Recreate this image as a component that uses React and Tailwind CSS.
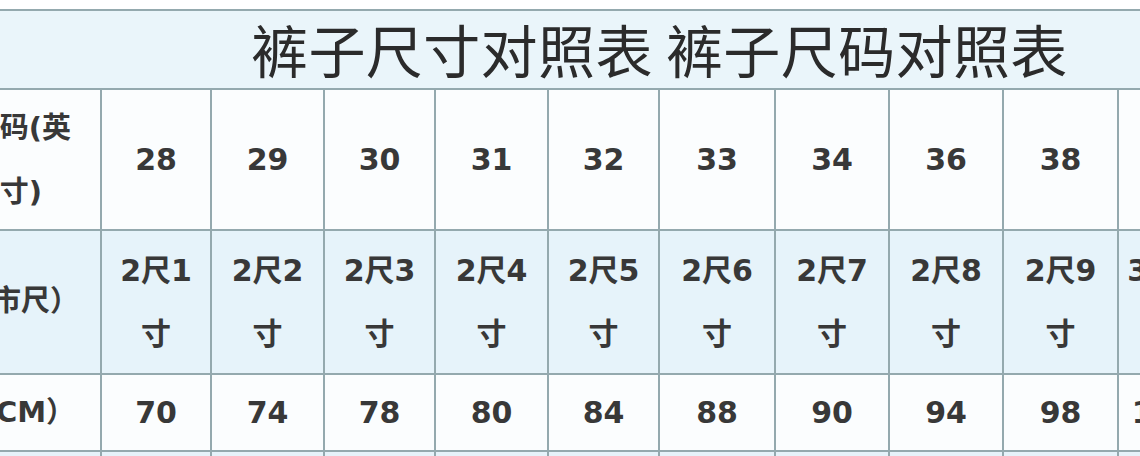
const widths = [160, 110, 113, 111, 113, 111, 116, 114, 114, 115, 90];

const sizes = ["28", "29", "30", "31", "32", "33", "34", "36", "38", "40"];
const chi = ["1", "2", "3", "4", "5", "6", "7", "8", "9", "1"];
const cm = ["70", "74", "78", "80", "84", "88", "90", "94", "98", "102"];

const cell = "border-2 border-[#94a9ae] text-center align-middle p-0";

export default function App() {
    return (
        <div className="w-[1140px] h-[456px] overflow-hidden bg-white pt-[9px]">
            <table
                className="table-fixed border-collapse w-[1187px] ml-[-60px] text-[#383838]"
                style={{ fontFamily: '"DejaVu Sans", "Noto Sans CJK SC", sans-serif' }}
            >
                <colgroup>
                    {widths.map((w, i) => (
                        <col key={i} style={{ width: w }} />
                    ))}
                </colgroup>
                <tbody>

                    {/* title */}
                    <tr className="h-[79px] bg-[#eaf5fa]">
                        <td colSpan={11} className="border-2 border-[#94a9ae] p-0 pl-[309px] text-left align-middle">
                            <span
                                className="text-[57px] leading-none font-normal tracking-[0.4px] text-[#2b2b2b]"
                                style={{ fontFamily: '"Noto Sans CJK SC", sans-serif' }}
                            >
                                裤子尺寸对照表 裤子尺码对照表
                            </span>
                        </td>
                    </tr>

                    {/* inch */}
                    <tr className="h-[141px] bg-[#fbfdfe]">
                        <td className={cell + " text-[29px] leading-[64px] font-bold"}>
                            尺码(英<br />寸)
                        </td>
                        {sizes.map((s) => (
                            <td key={s} className={cell + " text-[30px] font-bold"}>{s}</td>
                        ))}
                    </tr>

                    {/* shi chi */}
                    <tr className="h-[144px] bg-[#e6f3fa]">
                        <td className={cell + " text-[29px] font-bold"}>（市尺）</td>
                        {chi.map((c, i) => (
                            <td key={i} className={cell + " text-[30px] leading-[63px] font-bold"}>
                                {i === 9 ? "3" : "2"}尺{c}<br />寸
                            </td>
                        ))}
                    </tr>

                    {/* cm */}
                    <tr className="h-[77px] bg-[#fbfdfe]">
                        <td className={cell + " text-[29px] font-bold"}>（CM）</td>
                        {cm.map((c) => (
                            <td key={c} className={cell + " text-[30px] font-bold"}>{c}</td>
                        ))}
                    </tr>

                    <tr className="h-[40px] bg-[#e6f3fa]">
                        {widths.map((w, i) => (
                            <td key={i} className={cell}></td>
                        ))}
                    </tr>
                </tbody>
            </table>
        </div>
    );
}
